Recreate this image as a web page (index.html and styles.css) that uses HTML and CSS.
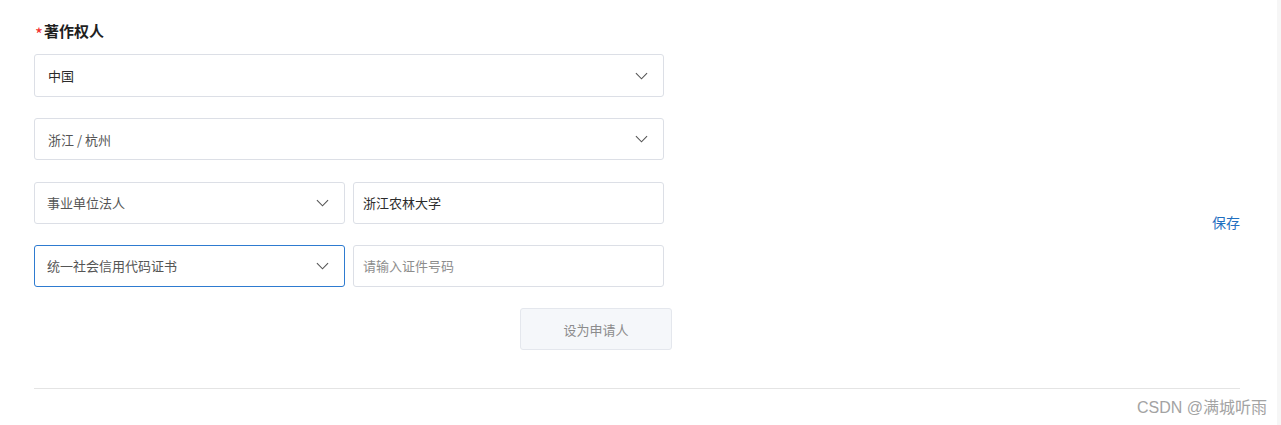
FILE: index.html
```html
<!DOCTYPE html>
<html lang="zh">
<head>
<meta charset="utf-8">
<link rel="stylesheet" href="styles.css">
</head>
<body>
<div class="page">
  <div class="main">
    <div class="content">
      <div class="form">
        <div class="label"><span class="req">*</span>著作权人</div>
        <div class="fields">
          <div class="row">
            <div class="select"><span class="val">中国</span><svg class="chev" viewBox="0 0 14 8"><path d="M1 1l6 6 6-6" /></svg></div>
          </div>
          <div class="row">
            <div class="select"><span class="val light">浙江 / 杭州</span><svg class="chev" viewBox="0 0 14 8"><path d="M1 1l6 6 6-6" /></svg></div>
          </div>
          <div class="row two">
            <div class="select"><span class="val light">事业单位法人</span><svg class="chev" viewBox="0 0 14 8"><path d="M1 1l6 6 6-6" /></svg></div>
            <div class="input"><span class="val">浙江农林大学</span></div>
          </div>
          <div class="row two">
            <div class="select focus"><span class="val light">统一社会信用代码证书</span><svg class="chev" viewBox="0 0 14 8"><path d="M1 1l6 6 6-6" /></svg></div>
            <div class="input"><span class="val ph">请输入证件号码</span></div>
          </div>
          <div class="actions">
            <div class="btn">设为申请人</div>
          </div>
        </div>
      </div>
      <div class="side">
        <a class="save">保存</a>
      </div>
    </div>
    <div class="divider"></div>
    <div class="footer"><span class="mark">CSDN @满城听雨</span></div>
  </div>
  <div class="strip"></div>
</div>
</body>
</html>
```
FILE: styles.css
```css
html, body {
  margin: 0;
  padding: 0;
  background: #fff;
}
body {
  font-family: "Microsoft YaHei", "Noto Sans CJK SC", "Noto Sans", sans-serif;
  color: #303133;
  width: 1281px;
  height: 425px;
  overflow: hidden;
}
.page {
  display: flex;
  height: 425px;
}
.main {
  flex: 1;
  padding-left: 34px;
  padding-right: 37px;
}
.content {
  display: flex;
  justify-content: space-between;
}
.form {
  width: 638px;
  padding-top: 20px;
}
.label {
  font-size: 15px;
  font-weight: bold;
  color: #1f1f1f;
  line-height: 22px;
  height: 22px;
  margin-bottom: 12px;
  display: flex;
  align-items: center;
}
.req {
  color: #f23030;
  font-size: 17px;
  font-weight: normal;
  margin-right: 1px;
  margin-left: 1px;
  padding-top: 5px;
}
.fields {
  display: flex;
  flex-direction: column;
  gap: 21.33px;
}
.row {
  display: flex;
  gap: 8px;
  width: 630px;
  height: 42px;
}
.row:first-child {
  height: 43px;
}
.select, .input {
  flex: 1 1 0;
  min-width: 0;
  box-sizing: border-box;
  border: 1px solid #dcdfe6;
  border-radius: 3px;
  display: flex;
  align-items: center;
  padding: 0 15px 0 13px;
  background: #fff;
}
.two .select, .two .input {
  flex: none;
  width: 311px;
}
.two .select {
  padding-left: 12px;
}
.input {
  padding-left: 9px;
}
.select.focus {
  border-color: #2e7bd0;
}
.val {
  flex: 1;
  font-size: 13px;
  color: #2b2b2b;
}
.val.light {
  color: #555;
}
.val.ph {
  color: #8d8d8d;
}
.chev {
  width: 13px;
  height: 8px;
  fill: none;
  stroke: #555;
  stroke-width: 1.2;
}
.actions {
  display: flex;
  justify-content: flex-end;
}
.btn {
  width: 152px;
  height: 42px;
  box-sizing: border-box;
  border: 1px solid #e4e7ed;
  border-radius: 3px;
  background: #f5f7fa;
  color: #8c8c8c;
  font-size: 13px;
  display: flex;
  align-items: center;
  justify-content: center;
}
.side {
  padding-top: 211px;
}
.save {
  font-size: 14px;
  color: #1f6fc0;
  line-height: 22px;
  display: block;
}
.divider {
  height: 1px;
  background: #e4e4e4;
  margin-top: 38px;
}
.footer {
  display: flex;
  justify-content: flex-end;
  margin-right: -27px;
  margin-top: 8px;
}
.mark {
  font-size: 16px;
  color: #a3a3a3;
  font-family: "Liberation Sans", "Noto Sans CJK SC", sans-serif;
  line-height: 22px;
}
.strip {
  width: 4px;
  background: #f6f6f6;
}
```
